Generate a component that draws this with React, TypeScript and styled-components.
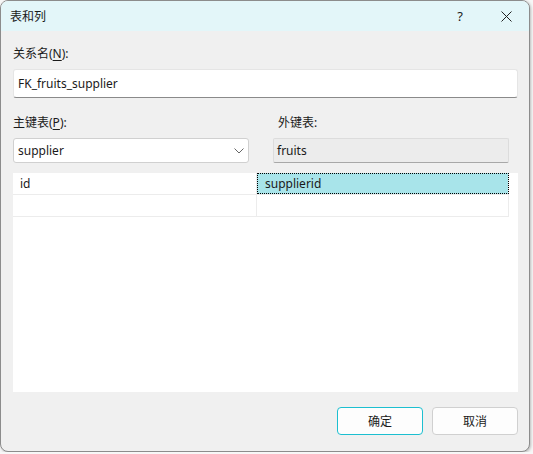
import React from 'react';
import styled, {createGlobalStyle} from 'styled-components';

const GlobalStyle = createGlobalStyle`
    html, body {
        margin: 0;
        padding: 0;
        background: #f7f7f7;
    }
    body {
        font-family: "Segoe UI", "Noto Sans", "Noto Sans CJK SC", sans-serif;
        font-size: 12px;
        color: #1a1a1a;
    }
`;

const Dialog = styled.div`
    width: 530px;
    height: 452px;
    box-sizing: border-box;
    border: 1px solid #8c8c8c;
    border-radius: 8px;
    background: #f0f0f0;
    overflow: hidden;
    display: flex;
    flex-direction: column;
    box-shadow: 1px 1px 3px rgba(0, 0, 0, 0.25);
`;

const TitleBar = styled.div`
    height: 30px;
    flex: 0 0 auto;
    background: #e3f6f9;
    display: flex;
    align-items: center;
    padding-left: 9px;
`;

const Title = styled.div`
    flex: 1 1 auto;
    font-size: 12px;
`;

const TitleButton = styled.div<{$w: number}>`
    width: ${(p) => p.$w}px;
    height: 30px;
    display: flex;
    align-items: center;
    justify-content: center;
    font-size: 13px;
`;

const Body = styled.div`
    flex: 1 1 auto;
    display: flex;
    flex-direction: column;
    padding: 14px 11px 0 12px;
`;

const Label = styled.div`
    height: 18px;
    line-height: 18px;
    margin-bottom: 6px;
`;

const Mn = styled.span`
    text-decoration: underline;
    text-underline-offset: 2px;
`;

const TextBox = styled.div`
    height: 29px;
    box-sizing: border-box;
    background: #fff;
    border: 1px solid #e5e5e5;
    border-bottom-color: #8a8a8a;
    border-radius: 3px;
    display: flex;
    align-items: center;
    padding-left: 4px;
    font-size: 12px;
`;

const TwoCols = styled.div`
    display: grid;
    grid-template-columns: 236px 1fr;
    column-gap: 29px;
    margin-top: 16px;
`;

const Field = styled.div`
    display: flex;
    flex-direction: column;
`;

const Combo = styled.div`
    height: 25px;
    box-sizing: border-box;
    background: #fff;
    border: 1px solid #d0d0d0;
    border-radius: 3px;
    display: flex;
    align-items: center;
    justify-content: space-between;
    padding: 0 4px;
    font-size: 12px;
`;

const ReadOnly = styled.div`
    height: 25px;
    width: 236px;
    margin-left: -5px;
    box-sizing: border-box;
    background: #ececec;
    border: 1px solid #dcdcdc;
    border-bottom-color: #a8a8a8;
    border-radius: 2px;
    display: flex;
    align-items: center;
    padding-left: 3px;
    font-size: 12px;
`;

const Grid = styled.div`
    margin-top: 10px;
    height: 219px;
    background: #fff;
`;

const GridRow = styled.div`
    display: grid;
    grid-template-columns: 244px 252px;
    height: 22px;
    border-bottom: 1px solid #ececec;
    width: 496px;
    box-sizing: border-box;
`;

const Cell = styled.div<{$selected?: boolean}>`
    box-sizing: border-box;
    display: flex;
    align-items: center;
    padding-left: ${(p) => (p.$selected ? 8 : 7)}px;
    font-size: 12px;
    border-right: 1px solid #ececec;
    background: ${(p) => (p.$selected ? '#a8e4ea' : '#fff')};
    outline: ${(p) => (p.$selected ? '1px dotted #000' : 'none')};
    outline-offset: -1px;
`;

const Footer = styled.div`
    display: flex;
    justify-content: flex-end;
    gap: 9px;
    margin-top: 15px;
`;

const Button = styled.div<{$primary?: boolean}>`
    width: 86px;
    height: 28px;
    box-sizing: border-box;
    background: #fdfdfd;
    border: 1px solid ${(p) => (p.$primary ? '#1cbfd0' : '#d0d0d0')};
    border-radius: 4px;
    display: flex;
    align-items: center;
    justify-content: center;
    font-size: 12px;
`;

const CloseIcon = () => (
    <svg width='11' height='11' viewBox='0 0 11 11'>
        <path d='M0.5 0.5 L10.5 10.5 M10.5 0.5 L0.5 10.5' stroke='#222' strokeWidth='1'/>
    </svg>
);

const Chevron = () => (
    <svg width='10' height='6' viewBox='0 0 10 6'>
        <path d='M0.5 0.5 L5 5 L9.5 0.5' fill='none' stroke='#666' strokeWidth='1'/>
    </svg>
);

const App = () => {
    return (
        <>
            <GlobalStyle/>
            <Dialog>
                <TitleBar>
                    <Title>{'表和列'}</Title>
                    <TitleButton $w={46}>{'?'}</TitleButton>
                    <TitleButton $w={46}><CloseIcon/></TitleButton>
                </TitleBar>
                <Body>
                    <Label>{'关系名('}<Mn>{'N'}</Mn>{'):'}</Label>
                    <TextBox>{'FK_fruits_supplier'}</TextBox>
                    <TwoCols>
                        <Field>
                            <Label>{'主键表('}<Mn>{'P'}</Mn>{'):'}</Label>
                            <Combo>
                                <span>{'supplier'}</span>
                                <Chevron/>
                            </Combo>
                        </Field>
                        <Field>
                            <Label>{'外键表:'}</Label>
                            <ReadOnly>{'fruits'}</ReadOnly>
                        </Field>
                    </TwoCols>
                    <Grid>
                        <GridRow>
                            <Cell>{'id'}</Cell>
                            <Cell $selected={true}>{'supplierid'}</Cell>
                        </GridRow>
                        <GridRow>
                            <Cell/>
                            <Cell/>
                        </GridRow>
                    </Grid>
                    <Footer>
                        <Button $primary={true}>{'确定'}</Button>
                        <Button>{'取消'}</Button>
                    </Footer>
                </Body>
            </Dialog>
        </>
    );
};

export default App;
